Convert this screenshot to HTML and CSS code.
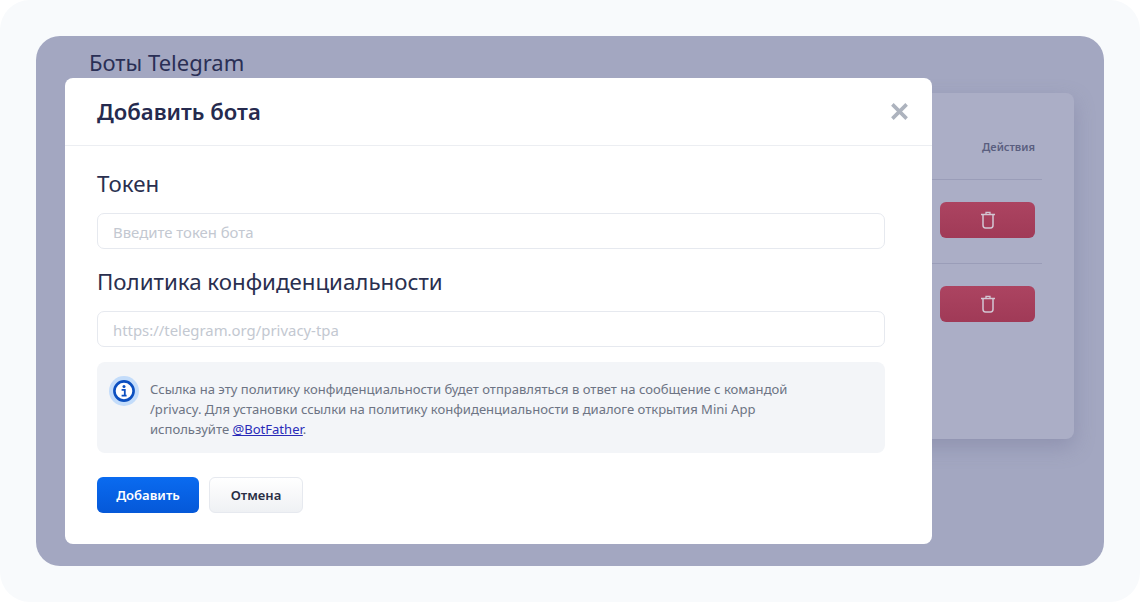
FILE: index.html
```html
<!DOCTYPE html>
<html lang="ru">
<head>
<meta charset="utf-8">
<title>Боты Telegram</title>
<link rel="stylesheet" href="styles.css">
</head>
<body>
<div class="frame">
  <div class="screen">
    <h1 class="page-title">Боты Telegram</h1>
    <div class="card">
      <div class="card-head">Действия</div>
      <div class="card-row">
        <button class="del-btn" type="button" aria-label="Удалить">
          <svg class="trash" viewBox="0 0 16 18" fill="none" stroke="currentColor" stroke-width="1.5"><path d="M1 3.500h14"/><path d="M6 3V1.300h4V3" stroke-width="1.300"/><path d="M3 4v10.200c0 1.600 1 2.700 2.500 2.700h5c1.500 0 2.500-1.100 2.500-2.700V4"/></svg>
        </button>
      </div>
      <div class="card-row">
        <button class="del-btn" type="button" aria-label="Удалить">
          <svg class="trash" viewBox="0 0 16 18" fill="none" stroke="currentColor" stroke-width="1.5"><path d="M1 3.500h14"/><path d="M6 3V1.300h4V3" stroke-width="1.300"/><path d="M3 4v10.200c0 1.600 1 2.700 2.500 2.700h5c1.500 0 2.500-1.100 2.500-2.700V4"/></svg>
        </button>
      </div>
    </div>
    <div class="modal">
      <div class="modal-head">
        <h2 class="modal-title">Добавить бота</h2>
        <svg class="close" viewBox="0 0 16 16" fill="none" stroke="currentColor" stroke-width="3"><path d="M2 2l12 12M14 2L2 14"/></svg>
      </div>
      <div class="modal-body">
        <label class="field-label">Токен</label>
        <input class="input" type="text" placeholder="Введите токен бота">
        <label class="field-label second">Политика конфиденциальности</label>
        <input class="input" type="text" placeholder="https://telegram.org/privacy-tpa">
        <div class="notice">
          <span class="notice-icon">
            <svg viewBox="0 0 24 24" fill="none"><circle cx="12" cy="12" r="9.600" fill="#fff" stroke="#0b4fc0" stroke-width="2.600"/><circle cx="12" cy="7.500" r="1.500" fill="#0b4fc0"/><path d="M9.600 10.800h3.200v5.600M9.600 16.600h5" stroke="#0b4fc0" stroke-width="1.800"/></svg>
          </span>
          <p class="notice-text">Ссылка на эту политику конфиденциальности будет отправляться в ответ на сообщение с командой /privacy. Для установки ссылки на политику конфиденциальности в диалоге открытия Mini App используйте <a href="#">@BotFather</a>.</p>
        </div>
        <div class="actions">
          <button class="btn primary" type="button">Добавить</button>
          <button class="btn secondary" type="button">Отмена</button>
        </div>
      </div>
    </div>
  </div>
</div>
</body>
</html>
```
FILE: styles.css
```css
* { box-sizing: border-box; }
html, body { margin: 0; padding: 0; background: #fff; }
body { font-family: "Noto Sans", "Open Sans", sans-serif; width: 1140px; height: 602px; overflow: hidden; }

.frame { width: 1140px; height: 602px; padding: 36px; background: #f8fafc; border-radius: 30px; }
.screen { position: relative; height: 530px; padding: 0 30px 0 53px; background: #a3a7c1; border-radius: 24px; }

.page-title { margin: 0; padding-top: 11px; height: 57px; font-size: 22px; line-height: 30px; font-weight: 400; color: #2a2f55; }

.card { height: 346px; padding: 0 32px; background: #abaec6; border-radius: 8px; box-shadow: 0 8px 20px rgba(120, 122, 155, .45); }
.card-head { height: 86px; padding: 45px 7px 0 0; text-align: right; font-size: 11px; line-height: 17px; font-weight: 600; color: #5a5e7f; }
.card-row { height: 84px; padding: 22px 7px 0 0; display: flex; justify-content: flex-end; border-top: 1px solid #9a9db8; }
.del-btn { width: 95px; height: 36px; padding: 0; border: 0; border-radius: 6px; background: linear-gradient(#ac4461, #a03a57); color: #d3c6d3; display: flex; align-items: center; justify-content: center; }
.trash { width: 16px; height: 18px; }

.modal { position: absolute; left: 29px; top: 42px; width: 867px; height: 466px; background: #fff; border-radius: 8px; }
.modal-head { height: 68px; padding: 0 23px 2px 32px; display: flex; align-items: center; justify-content: space-between; border-bottom: 1px solid #eceef2; }
.modal-title { margin: 0; font-size: 22.100px; line-height: 30px; font-weight: 600; color: #252a4e; }
.close { width: 19px; height: 19px; color: #adb3be; margin-top: 1px; }

.modal-body { padding: 22px 47px 0 32px; }
.field-label { display: block; font-size: 22.300px; line-height: 32px; color: #2a2f4f; }
.field-label.second { margin-top: 17px; }
.input { display: block; width: 100%; height: 36px; margin-top: 13px; padding: 1px 15px 0; border: 1px solid #e6e9ef; border-radius: 7px; background: #fff; font: 14.900px "Noto Sans", sans-serif; color: #2a2f4f; }
.input::placeholder { color: #c3c8d1; opacity: 1; }

.notice { display: flex; gap: 11px; height: 91px; margin-top: 15px; padding: 17px 16px 0 12px; background: #f3f5f8; border-radius: 8px; }
.notice-icon { flex: none; width: 30px; height: 30px; margin-top: -3px; border-radius: 50%; background: #c3dcfa; display: flex; align-items: center; justify-content: center; }
.notice-icon svg { width: 24px; height: 24px; }
.notice-text { margin: 0; width: 662px; font-size: 13.050px; line-height: 20px; color: #6d7484; }
.notice-text a { color: #2a2bb8; }

.actions { display: flex; gap: 10px; margin-top: 24px; }
.btn { height: 36px; padding: 0; border-radius: 6px; font: 600 13.100px "Noto Sans", sans-serif; }
.primary { width: 102px; border: 0; background: linear-gradient(#0a6bf0, #0558d8); color: #fff; }
.secondary { width: 94px; border: 1px solid #e6e9ef; background: linear-gradient(#fff, #eff1f4); color: #2a2f45; }
```
